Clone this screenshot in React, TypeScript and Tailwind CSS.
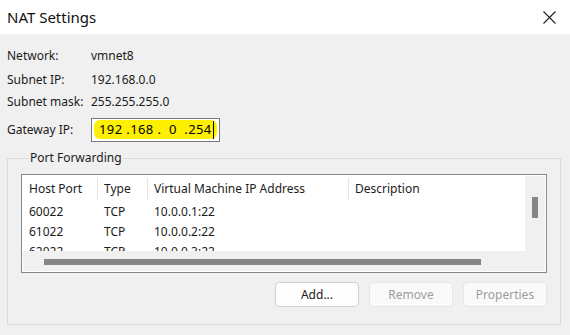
import React from 'react';

const rows = [
  { port: '60022', type: 'TCP', ip: '10.0.0.1:22' },
  { port: '61022', type: 'TCP', ip: '10.0.0.2:22' },
  { port: '62022', type: 'TCP', ip: '10.0.0.3:22' },
];

const InfoRow: React.FC<{ label: string; value: string; className?: string }> = ({ label, value, className }) => (
  <div className={`flex h-4 items-center leading-4 ${className ?? ''}`}>
    <span className="w-[84px]">{label}</span>
    <span>{value}</span>
  </div>
);

const Button: React.FC<{ label: string; disabled?: boolean }> = ({ label, disabled }) => (
  <button
    className={
      disabled
        ? 'h-[25px] w-[84px] rounded-[4px] border border-[#e6e6e6] bg-[#fafafa] text-[#9d9d9d]'
        : 'h-[25px] w-[84px] rounded-[4px] border border-[#d0d0d0] bg-[#fefefe] text-[#1a1a1a]'
    }
  >
    {label}
  </button>
);

export default function App() {
  return (
    <div
      className="h-[335px] w-[570px] overflow-hidden bg-[#f0f0f0] text-[12px] text-[#1b1b1b]"
      style={{ fontFamily: '"Noto Sans", "Segoe UI", sans-serif' }}
    >
      {/* Title bar */}
      <div className="flex h-[34px] items-center justify-between bg-white pl-[7px] pr-[14px]">
        <span className="text-[15px] text-[#111]">NAT Settings</span>
        <svg width="13" height="13" viewBox="0 0 13 13" className="text-[#222]">
          <path d="M0.5 0.5 L12.5 12.5 M12.5 0.5 L0.5 12.5" stroke="currentColor" strokeWidth="1.1" />
        </svg>
      </div>

      <div className="pl-[7px] pr-[9px] pt-[14px]">
        <InfoRow label="Network:" value="vmnet8" />
        <InfoRow label="Subnet IP:" value="192.168.0.0" className="mt-2" />
        <InfoRow label="Subnet mask:" value="255.255.255.0" className="mt-[6px]" />

        {/* Gateway */}
        <div className="mt-2 flex h-6 items-center">
          <span className="w-[84px]">Gateway IP:</span>
          <div className="relative h-6 w-[129px] border border-[#7a7a7a] bg-white">
            <div className="absolute left-[2px] right-[2px] top-[1px] bottom-[2px] rounded-[6px] bg-[#fff000]" />
            <div className="relative flex h-full items-center pl-[7px] text-[13px] tracking-[0.4px] whitespace-pre text-black">
              <span>192 .168 .  0  .254</span>
              <span className="ml-[1px] h-[18px] w-px bg-black" />
            </div>
          </div>
        </div>

        {/* Port forwarding group */}
        <fieldset className="mt-2 border border-[#dcdcdc] px-[13px] pb-[17px]">
          <legend className="ml-[8px] px-[1px] leading-4">Port Forwarding</legend>

          <div className="mt-2 h-[99px] border border-[#828790]">
            <div className="flex h-full flex-col border border-white">
              <div className="flex h-[75px]">
                <div className="flex-1 overflow-hidden bg-white">
                  <div className="flex h-6 items-center pt-[2px]">
                    <div className="flex h-full w-[75px] items-center border-r border-[#e5e5e5] pl-[6px]">Host Port</div>
                    <div className="flex h-full w-[50px] items-center border-r border-[#e5e5e5] pl-[6px]">Type</div>
                    <div className="flex h-full w-[201px] items-center border-r border-[#e5e5e5] pl-[6px]">Virtual Machine IP Address</div>
                    <div className="flex h-full items-center pl-[6px]">Description</div>
                  </div>
                  {rows.map((r) => (
                    <div key={r.port} className="flex h-5 items-center pt-[3px]">
                      <div className="w-[75px] pl-[6px]">{r.port}</div>
                      <div className="w-[50px] pl-[6px]">{r.type}</div>
                      <div className="w-[201px] pl-[6px]">{r.ip}</div>
                    </div>
                  ))}
                </div>
                {/* Vertical scrollbar */}
                <div className="w-5 bg-[#f0f0f0] pl-[7px] pt-[21px]">
                  <div className="h-[21px] w-[6px] bg-[#858585]" />
                </div>
              </div>
              {/* Horizontal scrollbar */}
              <div className="h-5 bg-[#f0f0f0] pl-[21px] pt-2">
                <div className="h-[6px] w-[437px] bg-[#858585]" />
              </div>
            </div>
          </div>

          <div className="mt-[9px] flex justify-end gap-[10px]">
            <Button label="Add..." />
            <Button label="Remove" disabled />
            <Button label="Properties" disabled />
          </div>
        </fieldset>
      </div>
    </div>
  );
}
